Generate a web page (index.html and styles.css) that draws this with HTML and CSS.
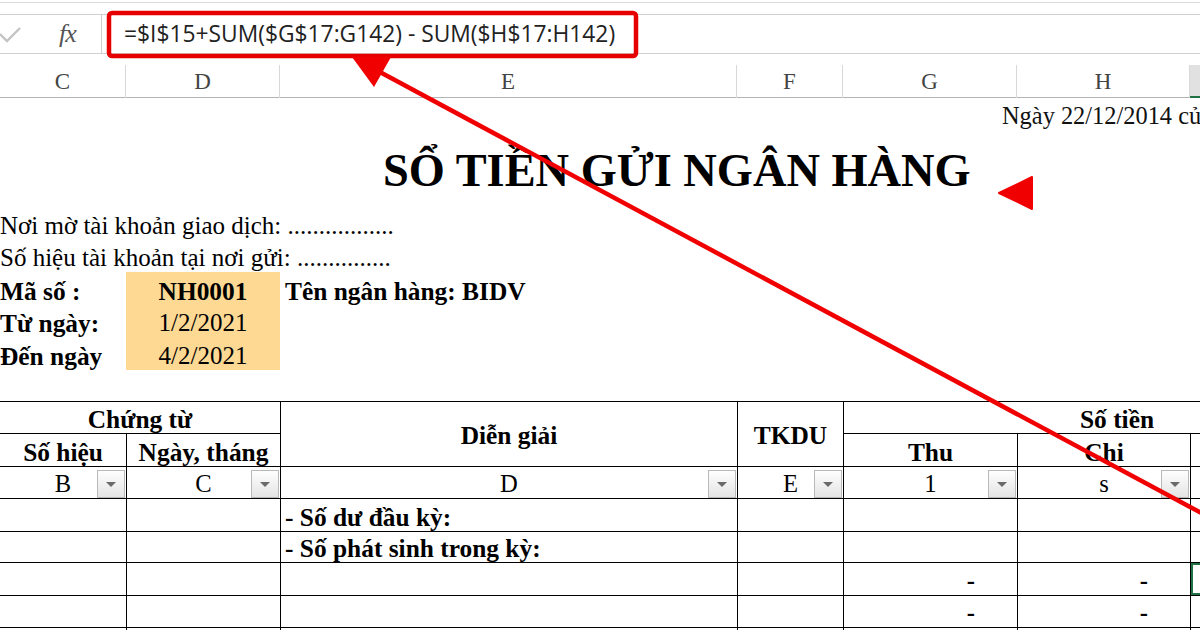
FILE: index.html
```html
<!DOCTYPE html>
<html lang="vi">
<head>
<meta charset="utf-8">
<title>Sổ tiền gửi ngân hàng</title>
<link rel="stylesheet" href="styles.css">
</head>
<body>
<div class="topline"></div>
<div class="fbar">
  <div class="fbtns">
    <svg class="check" width="22" height="18" viewBox="0 0 22 18"><path d="M0 8 L7 15 L20 2" fill="none" stroke="#c4c4c4" stroke-width="2.4"/></svg>
    <span class="fx">fx</span>
  </div>
  <div class="formula">=$I$15+SUM($G$17:G142) - SUM($H$17:H142)</div>
</div>
<div class="colheads">
  <div>C</div><div>D</div><div>E</div><div>F</div><div>G</div><div>H</div><div class="sel"></div>
</div>
<div class="sheet">
  <div class="date">Ngày 22/12/2014 của</div>
  <h1 class="title">SỔ TIỀN GỬI NGÂN HÀNG</h1>
  <div class="info">
    <div class="span3">Nơi mờ tài khoản giao dịch: .................</div>
    <div class="span3">Số hiệu tài khoản tại nơi gửi: ...............</div>
    <div class="b">Mã số :</div><div class="yel b">NH0001</div><div class="b bank">Tên ngân hàng: BIDV</div>
    <div class="b">Từ ngày:</div><div class="yel">1/2/2021</div><div></div>
    <div class="b">Đến ngày</div><div class="yel">4/2/2021</div><div></div>
  </div>
  <table class="ledger">
    <colgroup><col class="c1"><col class="c2"><col class="c3"><col class="c4"><col class="c5"><col class="c6"><col class="c7"></colgroup>
    <tr class="h32">
      <td colspan="2" class="b">Chứng từ</td>
      <td rowspan="2" class="b mid">Diễn giải</td>
      <td rowspan="2" class="b mid">TKDU</td>
      <td colspan="3" class="b">Số tiền</td>
    </tr>
    <tr class="h33">
      <td class="b">Số hiệu</td><td class="b">Ngày, tháng</td>
      <td class="b">Thu</td><td class="b">Chi</td><td></td>
    </tr>
    <tr class="h32">
      <td>B<span class="fb"></span></td><td>C<span class="fb"></span></td><td>D<span class="fb"></span></td>
      <td>E<span class="fb"></span></td><td>1<span class="fb"></span></td><td>s<span class="fb"></span></td><td></td>
    </tr>
    <tr class="h33">
      <td></td><td></td><td class="b left">- Số dư đầu kỳ:</td><td></td><td></td><td></td><td></td>
    </tr>
    <tr class="h31">
      <td></td><td></td><td class="b left">- Số phát sinh trong kỳ:</td><td></td><td></td><td></td><td></td>
    </tr>
    <tr class="h33">
      <td></td><td></td><td></td><td></td><td class="num">-</td><td class="num">-</td><td class="active"></td>
    </tr>
    <tr class="h32">
      <td></td><td></td><td></td><td></td><td class="num">-</td><td class="num">-</td><td></td>
    </tr>
    <tr class="h32">
      <td></td><td></td><td></td><td></td><td></td><td></td><td></td>
    </tr>
  </table>
</div>
<svg class="annot" width="1200" height="630" viewBox="0 0 1200 630">
  <rect x="109" y="13" width="527" height="43" rx="3" fill="none" stroke="#e60000" stroke-width="4.5"/>
  <line x1="1205" y1="515" x2="378" y2="71" stroke="#f00000" stroke-width="4.5"/>
  <polygon points="352,57 391,57 374,87" fill="#f00000"/>
  <polygon points="999,193 1032,177 1032,209" fill="#f00000" stroke="#f00000" stroke-width="2" stroke-linejoin="round"/>
</svg>
</body>
</html>
```

FILE: styles.css
```css
* { box-sizing: border-box; }
html, body { margin: 0; padding: 0; }
body {
  width: 1200px;
  height: 630px;
  overflow: hidden;
  position: relative;
  background: #fff;
  color: #000;
  font-family: "Liberation Serif", "Times New Roman", serif;
}
.topline { height: 3px; border-bottom: 1px solid #dcdcdc; }
.fbar {
  margin-top: 11px;
  height: 40px;
  display: flex;
  border-top: 1px solid #d0d0d0;
  border-bottom: 1px solid #d0d0d0;
}
.fbtns {
  width: 102px;
  flex: none;
  display: flex;
  align-items: center;
  border-right: 1px solid #d0d0d0;
}
.check { margin-left: 0; margin-top: 2px; }
.fx {
  margin-left: 37px;
  font-style: italic;
  font-size: 26px;
  color: #555;
  letter-spacing: -1px;
}
.formula {
  padding-left: 22px;
  font-family: "Open Sans", "Liberation Sans", sans-serif;
  font-size: 22.8px;
  line-height: 38px;
  color: #222;
  white-space: nowrap;
}
.colheads {
  margin-top: 11px;
  height: 33px;
  display: grid;
  grid-template-columns: 126px 154px 457px 106px 174px 173px 1fr;
  border-bottom: 1px solid #b4b4b4;
}
.colheads div {
  border-right: 1px solid #d8d8d8;
  text-align: center;
  font-size: 23px;
  line-height: 33px;
  color: #444;
}
.colheads .sel { background: #e1e1e1; border-bottom: 2px solid #217346; border-right: none; }
.sheet { white-space: nowrap; }
.date {
  height: 32px;
  padding-top: 2px;
  padding-left: 1002px;
  font-size: 24.4px;
  line-height: 31px;
  color: #111;
}
.title {
  margin: 11px 0 0;
  padding-left: 383px;
  font-size: 46.4px;
  font-weight: bold;
  line-height: 60px;
}
.info {
  margin-top: 7px;
  display: grid;
  grid-template-columns: 126px 154px 1fr;
  grid-template-rows: 32px 32px 33px 32px 33px;
  font-size: 25px;
}
.info div {
  display: flex;
  align-items: flex-end;
  padding-bottom: 1px;
  line-height: 26px;
}
.info .span3 { grid-column: 1 / 4; }
.info .yel { background: #fdd994; justify-content: center; }
.info .bank { padding-left: 5px; }
.b { font-weight: bold; font-size: 25.4px; }
.ledger {
  margin-top: 31px;
  margin-left: -1px;
  border-collapse: collapse;
  table-layout: fixed;
  width: 1391px;
  font-size: 24.6px;
}
.c1 { width: 127px; }
.c2 { width: 154px; }
.c3 { width: 457px; }
.c4 { width: 106px; }
.c5 { width: 174px; }
.c6 { width: 173px; }
.c7 { width: 200px; }
.ledger td {
  border: 1px solid #000;
  height: 32px;
  padding: 0 0 1px;
  line-height: 26px;
  vertical-align: bottom;
  text-align: center;
  position: relative;
}
.ledger tr.h31 td { height: 31px; }
.ledger tr.h33 td { height: 33px; }
.ledger td.mid { vertical-align: middle; padding: 2px 0 0; }
.ledger td.left { text-align: left; padding-left: 4px; }
.ledger td.num { text-align: right; padding-right: 42px; font-weight: bold; }
.ledger td.active { box-shadow: inset 0 0 0 2px #217346; }
.fb {
  position: absolute;
  right: 1px;
  bottom: 0;
  width: 28px;
  height: 28px;
  border: 1px solid #b9b9b9;
  background: linear-gradient(#fefefe, #e4e4e4);
}
.fb::after {
  content: "";
  position: absolute;
  left: 8px;
  top: 11px;
  border-left: 5px solid transparent;
  border-right: 5px solid transparent;
  border-top: 5px solid #6a6a6a;
}
.annot { position: absolute; top: 0; left: 0; pointer-events: none; }
```
